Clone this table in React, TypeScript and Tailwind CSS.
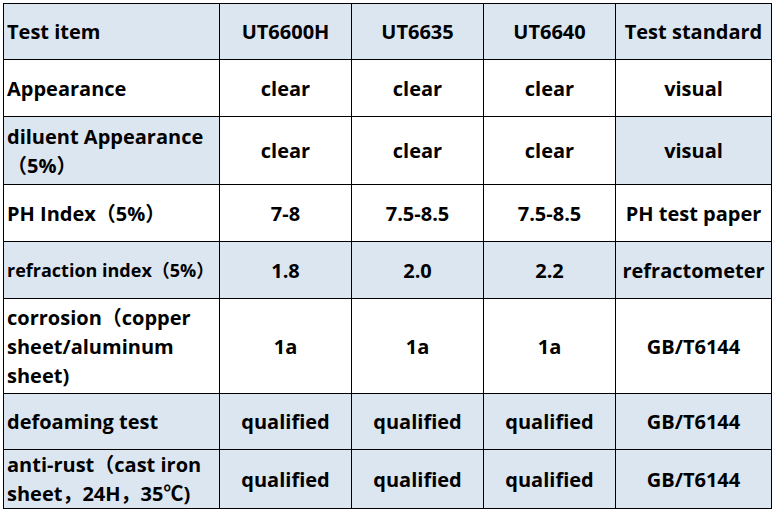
import React from 'react';

type Row = {
  h: string;
  item: string;
  values: string[];
  standard: string;
  bg: 'all' | 'edges' | 'none';
  small?: boolean;
};

const rows: Row[] = [
  { h: 'h-[57px]', item: 'Appearance', values: ['clear', 'clear', 'clear'], standard: 'visual', bg: 'none' },
  { h: 'h-[68px]', item: 'diluent Appearance （5%）', values: ['clear', 'clear', 'clear'], standard: 'visual', bg: 'edges' },
  { h: 'h-[57px]', item: 'PH Index（5%）', values: ['7-8', '7.5-8.5', '7.5-8.5'], standard: 'PH test paper', bg: 'none' },
  { h: 'h-[57px]', item: 'refraction index（5%）', values: ['1.8', '2.0', '2.2'], standard: 'refractometer', bg: 'all', small: true },
  { h: 'h-[95px]', item: 'corrosion（copper sheet/aluminum sheet)', values: ['1a', '1a', '1a'], standard: 'GB/T6144', bg: 'none' },
  { h: 'h-[56px]', item: 'defoaming test', values: ['qualified', 'qualified', 'qualified'], standard: 'GB/T6144', bg: 'all' },
  { h: 'h-[57px]', item: 'anti-rust（cast iron sheet，24H，35℃)', values: ['qualified', 'qualified', 'qualified'], standard: 'GB/T6144', bg: 'all' },
];

const cell = 'border border-black align-middle';

const App: React.FC = () => {
  return (
    <div className="w-[773px] h-[509px] bg-white pt-[3px] pl-[3px] font-['Open_Sans','Noto_Sans_CJK_SC',sans-serif] font-bold text-black text-[20px] leading-[29px]">
      <table className="table-fixed border-collapse w-[768px]">
        <colgroup>
          <col className="w-[216px]" />
          <col className="w-[132px]" />
          <col className="w-[132px]" />
          <col className="w-[132px]" />
          <col className="w-[156px]" />
        </colgroup>
        <thead>
          <tr className="h-[56px] bg-[#dce6f1]">
            <th className={`${cell} text-left pl-[3px] pr-[2px] font-bold`}>Test item</th>
            <th className={`${cell} text-center font-bold`}>UT6600H</th>
            <th className={`${cell} text-center font-bold`}>UT6635</th>
            <th className={`${cell} text-center font-bold`}>UT6640</th>
            <th className={`${cell} text-center font-bold`}>Test standard</th>
          </tr>
        </thead>
        <tbody>
          {rows.map((row) => {
            const edge = row.bg === 'none' ? 'bg-white' : 'bg-[#dce6f1]';
            const mid = row.bg === 'all' ? 'bg-[#dce6f1]' : 'bg-white';
            return (
              <tr key={row.item} className={row.h}>
                <td className={`${cell} ${edge} text-left pl-[3px] pr-[2px] ${row.small ? 'text-[18px]' : ''}`}>
                  {row.item}
                </td>
                {row.values.map((v, i) => (
                  <td key={i} className={`${cell} ${mid} text-center`}>{v}</td>
                ))}
                <td className={`${cell} ${edge} text-center`}>{row.standard}</td>
              </tr>
            );
          })}
        </tbody>
      </table>
    </div>
  );
};

export default App;
